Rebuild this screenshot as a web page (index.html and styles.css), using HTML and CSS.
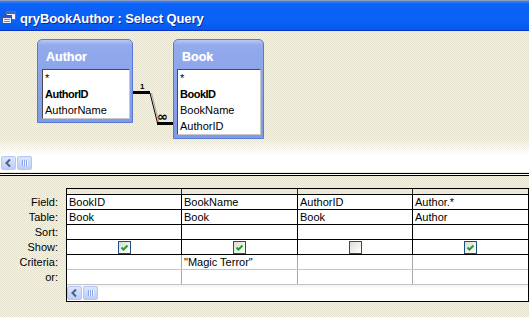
FILE: index.html
```html
<!DOCTYPE html>
<html>
<head>
<meta charset="utf-8">
<title>qryBookAuthor : Select Query</title>
<link rel="stylesheet" href="styles.css">
</head>
<body>
<div class="window">
  <div class="titlebar">
    <svg class="ticon" width="14" height="13" viewBox="0 0 14 13">
      <rect x="4.5" y="0.5" width="9" height="8" fill="#f4f6fb" stroke="#5d6f96"/>
      <rect x="5" y="1" width="8" height="2" fill="#3a63c8"/>
      <rect x="0.5" y="4.5" width="9" height="8" fill="#e8edf8" stroke="#3f5384"/>
      <rect x="1" y="5" width="8" height="2" fill="#2d56c0"/>
      <path d="M2 8.5H8M2 10.5H8" stroke="#7d8fb8" stroke-width="1"/>
    </svg>
    <span class="title">qryBookAuthor : Select Query</span>
  </div>

  <div class="diagram">
    <div class="fl fl-author">
      <div class="fl-head">Author</div>
      <ul class="fl-list">
        <li>*</li>
        <li class="pk">AuthorID</li>
        <li>AuthorName</li>
      </ul>
    </div>
    <div class="fl fl-book">
      <div class="fl-head">Book</div>
      <ul class="fl-list">
        <li>*</li>
        <li class="pk">BookID</li>
        <li>BookName</li>
        <li>AuthorID</li>
      </ul>
    </div>
    <svg class="rel" width="529" height="124" viewBox="0 0 529 124">
      <path d="M133 61.5H150" stroke="#000" stroke-width="3"/>
      <path d="M150 62L157.5 92" stroke="#000" stroke-width="1"/>
      <path d="M151.5 62L159 92" stroke="#777" stroke-width="0.6"/>
      <path d="M157 92.5H173" stroke="#000" stroke-width="3"/>
      <text x="140" y="58" class="rel-one">1</text>
      <text x="157" y="90" class="rel-many">∞</text>
    </svg>
  </div>

  <div class="hscroll">
    <span class="sb-btn">
      <svg width="13" height="12" viewBox="0 0 13 12"><path d="M8 2.5L4.5 6L8 9.5" fill="none" stroke="#4d6185" stroke-width="2"/></svg>
    </span>
    <span class="sb-btn">
      <svg width="13" height="12" viewBox="0 0 13 12"><path d="M4.5 3V9M6.5 3V9M8.5 3V9" stroke="#8aa6ee" stroke-width="1"/><path d="M5.5 3V9M7.5 3V9M9.5 3V9" stroke="#eef3ff" stroke-width="1"/></svg>
    </span>
  </div>
  <div class="splitter"></div>

  <div class="lower">
    <div class="labels">
      <div>Field:</div>
      <div>Table:</div>
      <div>Sort:</div>
      <div>Show:</div>
      <div>Criteria:</div>
      <div>or:</div>
    </div>
    <div class="gridbox">
      <div class="grow sel"><span></span><span></span><span></span><span></span></div>
      <div class="grow"><span>BookID</span><span>BookName</span><span>AuthorID</span><span>Author.*</span></div>
      <div class="grow"><span>Book</span><span>Book</span><span>Book</span><span>Author</span></div>
      <div class="grow"><span></span><span></span><span></span><span></span></div>
      <div class="grow show">
        <span><i class="cb on"><svg width="11" height="11" viewBox="0 0 11 11"><path d="M2.5 5.5L4.5 7.5L8.5 3.5" fill="none" stroke="#21a121" stroke-width="2"/></svg></i></span>
        <span><i class="cb on"><svg width="11" height="11" viewBox="0 0 11 11"><path d="M2.5 5.5L4.5 7.5L8.5 3.5" fill="none" stroke="#21a121" stroke-width="2"/></svg></i></span>
        <span><i class="cb"></i></span>
        <span><i class="cb on"><svg width="11" height="11" viewBox="0 0 11 11"><path d="M2.5 5.5L4.5 7.5L8.5 3.5" fill="none" stroke="#21a121" stroke-width="2"/></svg></i></span>
      </div>
      <div class="grow soft"><span></span><span>"Magic Terror"</span><span></span><span></span></div>
      <div class="grow soft"><span></span><span></span><span></span><span></span></div>
      <div class="gscroll">
        <span class="sb-btn">
          <svg width="13" height="12" viewBox="0 0 13 12"><path d="M8 2.5L4.5 6L8 9.5" fill="none" stroke="#4d6185" stroke-width="2"/></svg>
        </span>
        <span class="sb-btn">
          <svg width="13" height="12" viewBox="0 0 13 12"><path d="M4.5 3V9M6.5 3V9M8.5 3V9" stroke="#8aa6ee" stroke-width="1"/><path d="M5.5 3V9M7.5 3V9M9.5 3V9" stroke="#eef3ff" stroke-width="1"/></svg>
        </span>
      </div>
    </div>
  </div>
</div>
</body>
</html>
```

FILE: styles.css
```css
body {
  margin: 0;
  width: 529px;
  height: 317px;
  overflow: hidden;
  font-family: "Liberation Sans", Arial, sans-serif;
  font-size: 11px;
  color: #000;
}

.window {
  height: 317px;
  display: flex;
  flex-direction: column;
  background: repeating-conic-gradient(#f5f3e9 0 25%, #e4e1ce 0 50%) 0 0 / 2px 2px;
}

/* title bar */
.titlebar {
  height: 29px;
  border-top: 1px solid #8a9cc0;
  border-bottom: 1px solid #0a34c6;
  background: linear-gradient(#3d86f8 0, #0c62f6 3px, #0961f5 70%, #0658ec 100%);
  display: flex;
  align-items: flex-start;
  padding-left: 2px;
  gap: 4px;
  flex: none;
}
.ticon {
  margin-top: 10px;
}
.title {
  margin-top: 10px;
  font-size: 13px;
  line-height: 15px;
  font-weight: bold;
  color: #fff;
  text-shadow: 1px 1px 0 #0a2a9a;
  letter-spacing: -0.1px;
}

/* table diagram */
.diagram {
  height: 124px;
  position: relative;
  flex: none;
  background: linear-gradient(to bottom, rgba(255,255,255,0) 108px, rgba(255,255,255,0.95) 124px);
}
.fl {
  position: absolute;
  top: 8px;
  border: 1px solid #5a79d6;
  border-radius: 5px 5px 0 0;
  background: linear-gradient(#b9c8f5 0, #93aaec 5px, #7f9ae6 100%);
  padding: 0 2px 3px 4px;
  display: flex;
  flex-direction: column;
}
.fl-author {
  left: 37px;
  width: 88px;
}
.fl-book {
  left: 173px;
  width: 84px;
  padding-left: 3px;
  padding-right: 2px;
}
.fl-head {
  height: 29px;
  box-sizing: border-box;
  padding: 10px 0 0 4px;
  font-size: 12.5px;
  line-height: 15px;
  font-weight: bold;
  color: #fff;
  text-shadow: 0 0 1px #c6d2f8;
}
.fl-book .fl-head {
  padding-left: 5px;
}
.fl-list {
  list-style: none;
  margin: 0;
  padding: 0 0 0 2px;
  background: #fff;
  border: 1px solid #4a4a4a;
  border-right-color: #c9c9c9;
  border-bottom-color: #c9c9c9;
}
.fl-list li {
  height: 16px;
  line-height: 16px;
  white-space: nowrap;
  overflow: hidden;
}
.fl-list li.pk {
  font-weight: bold;
  letter-spacing: -0.5px;
}
.rel {
  position: absolute;
  left: 0;
  top: 0;
  pointer-events: none;
}
.rel-one {
  font-family: "Liberation Sans", Arial, sans-serif;
  font-size: 8px;
  font-weight: bold;
}
.rel-many {
  font-family: "DejaVu Sans", sans-serif;
  font-size: 13px;
  font-weight: bold;
}

/* scrollbars */
.hscroll {
  height: 17px;
  box-sizing: border-box;
  padding: 1px 0 0 1px;
  background: #fff;
  display: flex;
  gap: 1px;
  flex: none;
}
.sb-btn {
  width: 15px;
  height: 14px;
  box-sizing: border-box;
  border: 1px solid #b4c7f2;
  border-radius: 2px;
  background: linear-gradient(#dbe5fd, #bccdf8);
  display: flex;
  align-items: center;
  justify-content: center;
}
.splitter {
  height: 1px;
  margin-top: 1px;
  border-top: 1px solid #000;
  border-bottom: 1px solid #000;
  background: #fff;
  flex: none;
}

/* QBE grid */
.lower {
  display: flex;
  padding-top: 12px;
  flex: none;
}
.labels {
  width: 66px;
  box-sizing: border-box;
  padding: 7px 8px 0 0;
  text-align: right;
}
.labels div {
  height: 15px;
  line-height: 14px;
}
.gridbox {
  width: 461px;
  border: 1px solid #000;
  background: #fff;
}
.grow {
  display: grid;
  grid-template-columns: 114px 115px 114px 115px;
  column-gap: 1px;
  height: 14px;
  background: #000;
  border-bottom: 1px solid #000;
}
.grow span {
  background: #fff;
  padding-left: 2px;
  line-height: 14px;
  white-space: nowrap;
  overflow: hidden;
}
.grow.sel {
  height: 5px;
  background: #2a2a2a;
}
.grow.sel span {
  background: #ece9d8;
}
.grow.show span {
  display: flex;
  justify-content: center;
  align-items: flex-start;
  padding-left: 0;
}
.grow.soft {
  background: #a8a8a8;
  border-bottom-color: #c4c4c4;
}
.cb {
  display: flex;
  align-items: center;
  justify-content: center;
  width: 13px;
  height: 13px;
  margin-top: 1px;
  box-sizing: border-box;
  border: 1px solid #1c5180;
  background: linear-gradient(135deg, #dcdcd5, #fff);
}
.gscroll {
  height: 16px;
  box-sizing: border-box;
  padding-top: 1px;
  display: flex;
  gap: 1px;
  background: linear-gradient(#f4f3ee, #fff 4px);
}
```
